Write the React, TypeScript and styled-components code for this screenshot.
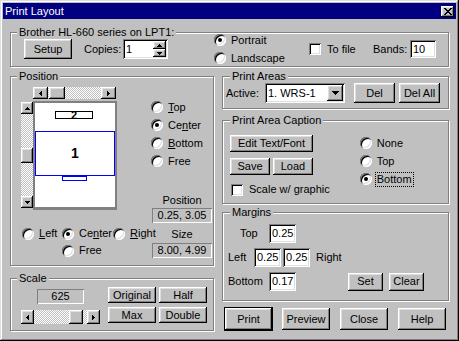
import React from "react";
import styled, { createGlobalStyle, css } from "styled-components";

const GlobalStyle = createGlobalStyle`
  * { box-sizing: border-box; }
  html, body { margin: 0; padding: 0; background: #c0c0c0; }
  body {
    font-family: "Liberation Sans", Arial, sans-serif;
    font-size: 11px;
    line-height: 13px;
    color: #000;
  }
`;

const raised = css`
  background: #c0c0c0;
  box-shadow: inset -1px -1px #000, inset 1px 1px #fff, inset -2px -2px #808080,
    inset 2px 2px #dfdfdf;
`;

const sunken = css`
  background: #fff;
  box-shadow: inset 1px 1px #808080, inset -1px -1px #fff, inset 2px 2px #000,
    inset -2px -2px #dfdfdf;
`;

const checker = css`
  background-color: #c0c0c0;
  background-image: conic-gradient(#fff 25%, #c0c0c0 0 50%, #fff 0 75%, #c0c0c0 0);
  background-size: 2px 2px;
`;

const Window = styled.div`
  width: 459px;
  height: 341px;
  padding: 3px;
  background: #c0c0c0;
  box-shadow: inset -1px -1px #000, inset 1px 1px #dfdfdf, inset -2px -2px #808080,
    inset 2px 2px #fff;
  display: flex;
  flex-direction: column;
`;

const TitleBar = styled.div`
  height: 16px;
  padding: 0 2px;
  background: #000080;
  color: #fff;
  display: flex;
  align-items: center;
  justify-content: space-between;
`;

const CloseBox = styled.div`
  ${raised}
  width: 13px;
  height: 11px;
  display: flex;
  align-items: center;
  justify-content: center;
`;

const Body = styled.div`
  padding: 7px 0 0 7px;
  display: flex;
  flex-direction: column;
`;

const Group = styled.fieldset<{ $w: number; $h: number; $mt?: number }>`
  margin: ${(p) => p.$mt ?? 0}px 0 0 0;
  padding: 0;
  min-width: 0;
  width: ${(p) => p.$w}px;
  height: ${(p) => p.$h}px;
  border: 1px solid #808080;
  box-shadow: inset 1px 1px #fff, 1px 1px #fff;
`;

const Legend = styled.legend<{ $indent?: number }>`
  margin-left: ${(p) => p.$indent ?? 6}px;
  padding: 0 2px;
  line-height: 13px;
  background: #c0c0c0;
`;

const Button = styled.button<{ $w: number; $h: number; $ml?: number; $default?: boolean }>`
  ${raised}
  flex: none;
  width: ${(p) => p.$w}px;
  height: ${(p) => p.$h}px;
  margin: 0 0 0 ${(p) => p.$ml ?? 0}px;
  padding: 0;
  border: none;
  font: inherit;
  color: #000;
  display: flex;
  align-items: center;
  justify-content: center;
  ${(p) =>
    p.$default &&
    css`
      box-shadow: 0 0 0 1px #000, inset -1px -1px #000, inset 1px 1px #fff,
        inset -2px -2px #808080, inset 2px 2px #dfdfdf;
    `}
`;

const Text = styled.span<{ $w?: number; $ml?: number }>`
  flex: none;
  white-space: nowrap;
  width: ${(p) => (p.$w ? `${p.$w}px` : "auto")};
  margin-left: ${(p) => p.$ml ?? 0}px;
`;

const Field = styled.div<{ $w: number; $h: number; $ml?: number }>`
  ${sunken}
  flex: none;
  width: ${(p) => p.$w}px;
  height: ${(p) => p.$h}px;
  margin-left: ${(p) => p.$ml ?? 0}px;
  padding-left: 3px;
  display: flex;
  align-items: center;
`;

const Readout = styled.div<{ $w: number; $mt?: number }>`
  width: ${(p) => p.$w}px;
  height: 15px;
  margin-top: ${(p) => p.$mt ?? 0}px;
  flex: none;
  box-shadow: inset 1px 1px #808080, inset -1px -1px #fff;
  display: flex;
  align-items: center;
  justify-content: center;
`;

const Check = styled.span`
  ${sunken}
  flex: none;
  width: 12px;
  height: 12px;
`;

const CheckItem = styled.div<{ $w?: number }>`
  display: flex;
  align-items: center;
  gap: 6px;
  height: 13px;
  white-space: nowrap;
  width: ${(p) => (p.$w ? `${p.$w}px` : "auto")};
  flex: none;
`;

const RadioDot = styled.span<{ $on?: boolean }>`
  flex: none;
  width: 12px;
  height: 12px;
  border-radius: 50%;
  background: #fff;
  box-shadow: inset 1px 1px #808080, inset -1px -1px #fff, inset 2px 2px #000,
    inset -2px -2px #dfdfdf;
  display: flex;
  align-items: center;
  justify-content: center;
  &::after {
    content: "";
    width: 4px;
    height: 4px;
    border-radius: 50%;
    background: ${(p) => (p.$on ? "#000" : "transparent")};
  }
`;

const RadioItem = styled.div<{ $h?: number }>`
  display: flex;
  align-items: center;
  gap: 5px;
  height: ${(p) => p.$h ?? 18}px;
  white-space: nowrap;
`;

const Focus = styled.span`
  outline: 1px dotted #000;
  outline-offset: 0;
  padding: 0 1px;
  margin-left: -1px;
`;

const RadioList = styled.div<{ $mt?: number; $ml?: number }>`
  display: flex;
  flex-direction: column;
  flex: none;
  margin-top: ${(p) => p.$mt ?? 0}px;
  margin-left: ${(p) => p.$ml ?? 0}px;
`;

/* scroll bars */
const HBar = styled.div<{ $w: number; $h: number }>`
  ${checker}
  width: ${(p) => p.$w}px;
  height: ${(p) => p.$h}px;
  display: flex;
  flex: none;
`;

const VBar = styled.div<{ $w: number; $h: number }>`
  ${checker}
  width: ${(p) => p.$w}px;
  height: ${(p) => p.$h}px;
  display: flex;
  flex-direction: column;
  flex: none;
`;

const ScrollBtn = styled.div<{ $w: number; $h: number }>`
  ${raised}
  flex: none;
  width: ${(p) => p.$w}px;
  height: ${(p) => p.$h}px;
  display: flex;
  align-items: center;
  justify-content: center;
`;

const Track = styled.div<{ $vertical?: boolean }>`
  flex: 1;
  display: flex;
  flex-direction: ${(p) => (p.$vertical ? "column" : "row")};
  min-width: 0;
  min-height: 0;
`;

const HThumb = styled.div<{ $w: number; $offset: number }>`
  ${raised}
  flex: none;
  width: ${(p) => p.$w}px;
  margin-left: ${(p) => p.$offset}px;
`;

const VThumb = styled.div<{ $h: number; $offset: number }>`
  ${raised}
  flex: none;
  height: ${(p) => p.$h}px;
  margin-top: ${(p) => p.$offset}px;
`;

type Dir = "left" | "right" | "up" | "down";

const Tri = ({ dir, n }: { dir: Dir; n: number }) => {
  const w = 2 * n - 1;
  const vertical = dir === "up" || dir === "down";
  const rows = Array.from({ length: n }, (_, i) => {
    const len = w - 2 * i;
    if (dir === "down") return <rect key={i} x={i} y={i} width={len} height={1} />;
    if (dir === "up") return <rect key={i} x={i} y={n - 1 - i} width={len} height={1} />;
    if (dir === "right") return <rect key={i} x={i} y={i} width={1} height={len} />;
    return <rect key={i} x={n - 1 - i} y={i} width={1} height={len} />;
  });
  return (
    <svg
      width={vertical ? w : n}
      height={vertical ? n : w}
      shapeRendering="crispEdges"
      fill="#000"
    >
      {rows}
    </svg>
  );
};

const CloseGlyph = () => {
  const rows = ["XX....XX", ".XX..XX.", "..XXXX..", "...XX...", "..XXXX..", ".XX..XX.", "XX....XX"];
  return (
    <svg width={8} height={7} shapeRendering="crispEdges" fill="#000">
      {rows.flatMap((r, y) =>
        r.split("").map((c, x) =>
          c === "X" ? <rect key={`${x}-${y}`} x={x} y={y} width={1} height={1} /> : null
        )
      )}
    </svg>
  );
};

const HScroll = (props: { w: number; h: number; arrow: number; thumb: number; pos: number }) => (
  <HBar $w={props.w} $h={props.h}>
    <ScrollBtn $w={props.arrow} $h={props.h}>
      <Tri dir="left" n={3} />
    </ScrollBtn>
    <Track>
      <HThumb $w={props.thumb} $offset={props.pos} />
    </Track>
    <ScrollBtn $w={props.arrow} $h={props.h}>
      <Tri dir="right" n={3} />
    </ScrollBtn>
  </HBar>
);

const VScroll = (props: { w: number; h: number; arrow: number; thumb: number; pos: number }) => (
  <VBar $w={props.w} $h={props.h}>
    <ScrollBtn $w={props.w} $h={props.arrow}>
      <Tri dir="up" n={3} />
    </ScrollBtn>
    <Track $vertical>
      <VThumb $h={props.thumb} $offset={props.pos} />
    </Track>
    <ScrollBtn $w={props.w} $h={props.arrow}>
      <Tri dir="down" n={3} />
    </ScrollBtn>
  </VBar>
);

/* printer row */
const PrinterRow = styled.div`
  display: flex;
  align-items: center;
  height: 20px;
  padding-left: 13px;
`;

const SpinField = styled.div`
  ${sunken}
  width: 45px;
  height: 20px;
  padding: 2px;
  display: flex;
  flex: none;
`;

const SpinValue = styled.div`
  flex: 1;
  padding-left: 1px;
  display: flex;
  align-items: center;
`;

const SpinButtons = styled.div`
  display: flex;
  flex-direction: column;
  width: 13px;
`;

const Orientation = styled(RadioList)`
  margin-top: -8px;
  margin-bottom: -8px;
  width: 95px;
`;

/* position group */
const Columns = styled.div`
  display: flex;
  gap: 8px;
  margin-top: 3px;
`;

const Column = styled.div<{ $w: number }>`
  width: ${(p) => p.$w}px;
  display: flex;
  flex-direction: column;
`;

const PosTop = styled.div`
  display: flex;
  align-items: flex-start;
  padding: 4px 0 0 10px;
`;

const Preview = styled.div`
  display: grid;
  grid-template-columns: 12px 84px;
  grid-template-rows: 14px 109px;
`;

const VScrollCell = styled.div`
  padding-top: 1px;
`;

const Page = styled.div`
  width: 84px;
  height: 109px;
  background: #fff;
  border: 2px solid #808080;
  border-bottom-width: 3px;
  display: flex;
  flex-direction: column;
  align-items: flex-start;
`;

const AreaTwo = styled.div`
  margin: 8px 0 0 20px;
  width: 38px;
  height: 8px;
  border: 1px solid #000;
  font-weight: bold;
  font-size: 11px;
  line-height: 6px;
  text-align: center;
  overflow: visible;
`;

const AreaOne = styled.div`
  margin-top: 12px;
  width: 80px;
  height: 45px;
  border: 1px solid #0000ff;
  display: flex;
  align-items: center;
  justify-content: center;
  font-size: 14px;
  font-weight: bold;
`;

const AreaCaption = styled.div`
  margin-left: 27px;
  width: 25px;
  height: 5px;
  border: 1px solid #0000ff;
`;

const SideCol = styled.div`
  display: flex;
  flex-direction: column;
  width: 60px;
  margin-left: 35px;
`;

const ValueCaption = styled.div<{ $mt: number }>`
  margin-top: ${(p) => p.$mt}px;
  height: 13px;
  text-align: center;
`;

const PosBottom = styled.div`
  display: grid;
  grid-template-columns: 40px 51px 39px 60px;
  grid-template-rows: 17px 17px;
  margin-top: 2px;
  padding-left: 11px;
  align-items: center;
`;

const SizeCaption = styled.div`
  grid-column: 4;
  grid-row: 1;
  text-align: center;
  padding-top: 2px;
`;

const SizeBox = styled.div`
  grid-column: 4;
  grid-row: 2;
`;

const FreeCell = styled.div`
  grid-column: 2;
  grid-row: 2;
`;

/* scale */
const ScaleRow = styled.div`
  display: flex;
  align-items: flex-start;
  padding-left: 10px;
`;

const ScaleLeft = styled.div`
  width: 79px;
  display: flex;
  flex-direction: column;
  align-items: center;
  gap: 6px;
  padding-top: 4px;
`;

const ScaleButtons = styled.div`
  display: grid;
  grid-template-columns: 48px 48px;
  grid-auto-rows: 16px;
  gap: 4px 3px;
  margin: 2px 0 0 8px;
`;

/* right column */
const Row = styled.div<{ $mt?: number; $pl?: number; $h?: number }>`
  display: flex;
  align-items: center;
  margin-top: ${(p) => p.$mt ?? 0}px;
  padding-left: ${(p) => p.$pl ?? 0}px;
  height: ${(p) => (p.$h ? `${p.$h}px` : "auto")};
`;

const Select = styled.div`
  ${sunken}
  width: 80px;
  height: 20px;
  padding: 2px;
  display: flex;
  flex: none;
`;

const SelectValue = styled.div`
  flex: 1;
  padding-left: 1px;
  display: flex;
  align-items: center;
`;

const CaptionBody = styled.div`
  display: flex;
  align-items: flex-start;
  padding-left: 7px;
`;

const Stack = styled.div`
  display: flex;
  flex-direction: column;
  flex: none;
`;

const DialogButtons = styled.div`
  display: flex;
  gap: 10px;
  margin-top: 7px;
  padding-left: 3px;
`;

export default function App() {
  return (
    <>
      <GlobalStyle />
      <Window>
        <TitleBar>
          <span>Print Layout</span>
          <CloseBox>
            <CloseGlyph />
          </CloseBox>
        </TitleBar>
        <Body>
          <Group $w={439} $h={41}>
            <Legend>Brother HL-660 series on LPT1:</Legend>
            <PrinterRow>
              <Button $w={48} $h={20}>Setup</Button>
              <Text $w={39} $ml={12}>Copies:</Text>
              <SpinField>
                <SpinValue>1</SpinValue>
                <SpinButtons>
                  <ScrollBtn $w={13} $h={8}>
                    <Tri dir="up" n={3} />
                  </ScrollBtn>
                  <ScrollBtn $w={13} $h={8}>
                    <Tri dir="down" n={3} />
                  </ScrollBtn>
                </SpinButtons>
              </SpinField>
              <Orientation $ml={46}>
                <RadioItem>
                  <RadioDot $on />
                  Portrait
                </RadioItem>
                <RadioItem>
                  <RadioDot />
                  Landscape
                </RadioItem>
              </Orientation>
              <CheckItem $w={64}>
                <Check />
                To file
              </CheckItem>
              <Text $w={37}>Bands:</Text>
              <Field $w={26} $h={18}>10</Field>
            </PrinterRow>
          </Group>

          <Columns>
            <Column $w={204}>
              <Group $w={204} $h={196}>
                <Legend>Position</Legend>
                <PosTop>
                  <Preview>
                    <span />
                    <HScroll w={83} h={12} arrow={15} thumb={16} pos={1} />
                    <VScrollCell>
                      <VScroll w={12} h={106} arrow={12} thumb={15} pos={34} />
                    </VScrollCell>
                    <Page>
                      <AreaTwo>2</AreaTwo>
                      <AreaOne>1</AreaOne>
                      <AreaCaption />
                    </Page>
                  </Preview>
                  <SideCol>
                    <RadioList $mt={11} $ml={-1}>
                      <RadioItem>
                        <RadioDot />
                        <span>
                          <u>T</u>op
                        </span>
                      </RadioItem>
                      <RadioItem>
                        <RadioDot $on />
                        <span>
                          Ce<u>n</u>ter
                        </span>
                      </RadioItem>
                      <RadioItem>
                        <RadioDot />
                        <span>
                          <u>B</u>ottom
                        </span>
                      </RadioItem>
                      <RadioItem>
                        <RadioDot />
                        Free
                      </RadioItem>
                    </RadioList>
                    <ValueCaption $mt={24}>Position</ValueCaption>
                    <Readout $w={60} $mt={1}>
                      0.25, 3.05
                    </Readout>
                  </SideCol>
                </PosTop>
                <PosBottom>
                  <RadioItem $h={17}>
                    <RadioDot />
                    <span>
                      <u>L</u>eft
                    </span>
                  </RadioItem>
                  <RadioItem $h={17}>
                    <RadioDot $on />
                    <span>
                      Ce<u>n</u>ter
                    </span>
                  </RadioItem>
                  <RadioItem $h={17}>
                    <RadioDot />
                    <span>
                      <u>R</u>ight
                    </span>
                  </RadioItem>
                  <SizeCaption>Size</SizeCaption>
                  <FreeCell>
                    <RadioItem $h={17}>
                      <RadioDot />
                      Free
                    </RadioItem>
                  </FreeCell>
                  <SizeBox>
                    <Readout $w={60}>8.00, 4.99</Readout>
                  </SizeBox>
                </PosBottom>
              </Group>

              <Group $w={204} $h={59} $mt={6}>
                <Legend>Scale</Legend>
                <ScaleRow>
                  <ScaleLeft>
                    <Readout $w={47}>625</Readout>
                    <HScroll w={79} h={14} arrow={13} thumb={14} pos={35} />
                  </ScaleLeft>
                  <ScaleButtons>
                    <Button $w={48} $h={16}>Original</Button>
                    <Button $w={48} $h={16}>Half</Button>
                    <Button $w={48} $h={16}>Max</Button>
                    <Button $w={48} $h={16}>Double</Button>
                  </ScaleButtons>
                </ScaleRow>
              </Group>
            </Column>

            <Column $w={227}>
              <Group $w={227} $h={39}>
                <Legend $indent={7}>Print Areas</Legend>
                <Row $pl={3} $h={20}>
                  <Text $w={39}>Active:</Text>
                  <Select>
                    <SelectValue>1. WRS-1</SelectValue>
                    <ScrollBtn $w={16} $h={16}>
                      <Tri dir="down" n={4} />
                    </ScrollBtn>
                  </Select>
                  <Button $w={41} $h={20} $ml={9}>Del</Button>
                  <Button $w={41} $h={20} $ml={4}>Del All</Button>
                </Row>
              </Group>

              <Group $w={227} $h={90} $mt={5}>
                <Legend $indent={7}>Print Area Caption</Legend>
                <CaptionBody>
                  <Stack>
                    <Row $mt={8}>
                      <Button $w={83} $h={17}>Edit Text/Font</Button>
                    </Row>
                    <Row $mt={6}>
                      <Button $w={40} $h={17}>Save</Button>
                      <Button $w={40} $h={17} $ml={3}>Load</Button>
                    </Row>
                    <Row $mt={8} $pl={1}>
                      <CheckItem>
                        <Check />
                        Scale w/ graphic
                      </CheckItem>
                    </Row>
                  </Stack>
                  <RadioList $mt={7} $ml={30}>
                    <RadioItem>
                      <RadioDot />
                      None
                    </RadioItem>
                    <RadioItem>
                      <RadioDot />
                      Top
                    </RadioItem>
                    <RadioItem>
                      <RadioDot $on />
                      <Focus>Bottom</Focus>
                    </RadioItem>
                  </RadioList>
                </CaptionBody>
              </Group>

              <Group $w={227} $h={95} $mt={2}>
                <Legend $indent={7}>Margins</Legend>
                <Row $mt={5} $pl={17}>
                  <Text $w={29}>Top</Text>
                  <Field $w={27} $h={19}>0.25</Field>
                </Row>
                <Row $mt={5} $pl={5}>
                  <Text $w={26}>Left</Text>
                  <Field $w={27} $h={19}>0.25</Field>
                  <Field $w={27} $h={19} $ml={2}>0.25</Field>
                  <Text $ml={6}>Right</Text>
                </Row>
                <Row $mt={5} $pl={5}>
                  <Text $w={41}>Bottom</Text>
                  <Field $w={27} $h={19}>0.17</Field>
                  <Button $w={35} $h={18} $ml={52}>Set</Button>
                  <Button $w={35} $h={18} $ml={6}>Clear</Button>
                </Row>
              </Group>

              <DialogButtons>
                <Button $w={47} $h={22} $default>Print</Button>
                <Button $w={48} $h={22}>Preview</Button>
                <Button $w={48} $h={22}>Close</Button>
                <Button $w={48} $h={22}>Help</Button>
              </DialogButtons>
            </Column>
          </Columns>
        </Body>
      </Window>
    </>
  );
}
